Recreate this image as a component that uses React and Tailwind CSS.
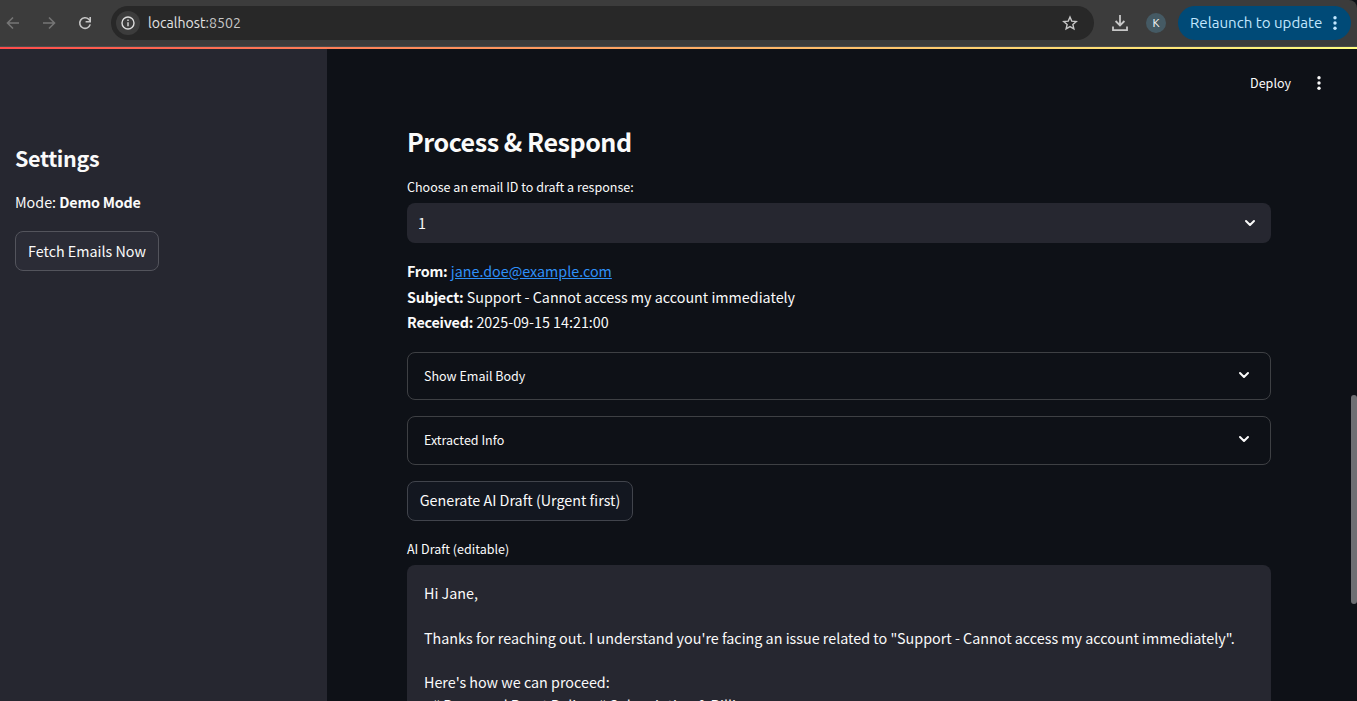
const UI = "font-['Noto_Sans_CJK_SC','Open_Sans',sans-serif]";

function Chevron({ className }) {
  return (
    <svg viewBox="0 0 12 8" className={className} fill="none" stroke="#fafafa" strokeWidth="2" strokeLinecap="round" strokeLinejoin="round">
      <path d="M2 2l4 4 4-4" />
    </svg>
  );
}

function Dots({ className }) {
  return (
    <svg viewBox="0 0 4 16" className={className} fill="currentColor">
      <circle cx="2" cy="2.8" r="1.7" />
      <circle cx="2" cy="8" r="1.7" />
      <circle cx="2" cy="13.2" r="1.7" />
    </svg>
  );
}

function Strong({ children }) {
  return <strong className="tracking-[-0.2px]">{children}</strong>;
}

function BrowserBar() {
  return (
    <header className="flex h-[47px] shrink-0 items-start rounded-tr-lg border-b border-[#4c4c4c] bg-[#3c3c3c] pt-[6px] font-['Ubuntu','Noto_Sans',sans-serif]">
      <div className="flex h-[34px] w-[111px] items-center">
        <svg viewBox="0 0 14 14" className="ml-[6px] size-[14px]" fill="none" stroke="#757575" strokeWidth="1.6">
          <path d="M13 7H1.8M7 1.5L1.5 7L7 12.5" />
        </svg>
        <svg viewBox="0 0 14 14" className="ml-[22px] size-[14px]" fill="none" stroke="#757575" strokeWidth="1.6">
          <path d="M1 7h11.2M7 1.5L12.5 7L7 12.5" />
        </svg>
        <svg viewBox="0 0 14 14" className="ml-[22px] size-[14px]" fill="none" stroke="#c7c7c7" strokeWidth="1.6">
          <path d="M12.2 8.4A5.3 5.3 0 1 1 10.8 3.3L12 4.6" />
          <path d="M12.2 1v4.7H7.6" />
        </svg>
      </div>
      <div className="flex h-[34px] w-[983px] items-center rounded-full bg-[#282828] pl-[5px] pr-[16px]">
        <div className="flex size-6 items-center justify-center rounded-full bg-[#3c3c3c]">
          <svg viewBox="0 0 14 14" className="size-[14px]" fill="none" stroke="#dcdcdc" strokeWidth="1.4">
            <circle cx="7" cy="7" r="6" />
            <path d="M7 6.2v4M7 3.6v1.5" />
          </svg>
        </div>
        <span className="ml-2 text-[14.15px] leading-5 text-[#e3e3e3]">localhost<span className="text-[#c7c7c7]">:8502</span></span>
        <svg viewBox="0 0 24 24" className="ml-auto size-4" fill="none" stroke="#c7c7c7" strokeWidth="2.1">
          <path d="M12 3l2.6 6.2 6.8.6-5.1 4.4 1.5 6.6L12 17.3l-5.8 3.5 1.5-6.6-5.1-4.4 6.8-.6z" />
        </svg>
      </div>
      <div className="flex h-[34px] grow items-center">
        <svg viewBox="0 0 16 16" className="ml-[18px] size-4" fill="none" stroke="#c7c7c7" strokeWidth="1.8">
          <path d="M8 0v10.2M3.6 6l4.4 4.4L12.4 6M1 11.5v3.6h14v-3.6" />
        </svg>
        <div className="ml-[18px] flex size-5 items-center justify-center rounded-full bg-[#455a64] text-[11.5px] leading-none text-white">K</div>
        <div className="ml-[12px] flex h-[34px] w-[173px] items-center rounded-full bg-[#004a77] pl-[12px] text-[#c2e7ff]">
          <span className="w-[136px] whitespace-nowrap text-[15.1px] leading-5">Relaunch to update</span>
          <Dots className="ml-[7px] h-4 w-1" />
        </div>
      </div>
    </header>
  );
}

function Sidebar() {
  return (
    <aside className="w-[327px] shrink-0 bg-[#262730] pl-[15px] pt-[94px]">
      <h2 className="text-[21.5px] font-semibold leading-[29px] tracking-[-0.35px]">Settings</h2>
      <p className="mt-[17px] text-[14.32px] leading-[26px]">Mode: <Strong>Demo Mode</Strong></p>
      <button className="mt-[16px] flex h-10 w-[144px] items-center justify-center whitespace-nowrap rounded-lg border border-[#53545c] bg-[#2b2c36] text-[14.32px]">Fetch Emails Now</button>
    </aside>
  );
}

function Expander({ label, className }) {
  return (
    <div className={`flex items-center rounded-lg border border-[#3e4044] pl-4 pr-[20px] ${className}`}>
      <span className="text-[12.53px] leading-5">{label}</span>
      <Chevron className="mb-[2px] ml-auto h-2 w-3" />
    </div>
  );
}

function Draft() {
  return (
    <div className="mt-[6px] h-[200px] whitespace-pre rounded-t-lg bg-[#262730] pl-[17px] pt-[17px] text-[14.33px] leading-[22.4px]">
      {`Hi Jane,

Thanks for reaching out. I understand you're facing an issue related to "Support - Cannot access my account immediately".

Here's how we can proceed:
- # Password Reset Policy; # Subscription & Billing`}
    </div>
  );
}

export default function App() {
  return (
    <div className="flex h-[701px] w-[1357px] flex-col overflow-hidden bg-[#0e1117]">
      <BrowserBar />
      <div className="h-[2px] shrink-0 bg-linear-to-r from-[#ff4b4b] to-[#fffd80]" />
      <div className={`flex min-h-0 grow text-[#fafafa] ${UI}`}>
        <Sidebar />
        <main className="flex min-w-0 grow flex-col">
          <div className="mt-[24px] flex h-5 shrink-0 items-center justify-end pr-[30px] text-[12.53px] leading-5">
            Deploy
            <Dots className="ml-[26px] h-4 w-1" />
          </div>
          <section className="ml-20 mt-[33px] w-[864px] shrink-0">
            <h2 className="text-[25.06px] font-semibold leading-[30px] tracking-[-0.46px]">Process &amp; Respond</h2>
            <div className="mt-[21px] text-[12.53px] leading-5">Choose an email ID to draft a response:</div>
            <div className="mt-[6px] flex h-10 items-center rounded-lg bg-[#262730] pl-[11px] pr-[15px] text-[14.32px]">
              1
              <Chevron className="ml-auto h-2 w-3" />
            </div>
            <div className="mt-[15px] text-[14.32px] leading-[25.6px]">
              <p><Strong>From:</Strong> <a className="text-[#2e90f8] underline">jane.doe@example.com</a></p>
              <p><Strong>Subject:</Strong> Support - Cannot access my account immediately</p>
              <p><Strong>Received:</Strong> 2025-09-15 14:21:00</p>
            </div>
            <Expander label="Show Email Body" className="mt-[17px] h-12" />
            <Expander label="Extracted Info" className="mt-4 h-[49px]" />
            <button className="mt-4 flex h-10 w-[226px] items-center justify-center whitespace-nowrap rounded-lg border border-[#41444c] bg-[#131720] pb-[2px] text-[14.32px]">Generate AI Draft (Urgent first)</button>
            <div className="mt-[18px] text-[12.53px] leading-5">AI Draft (editable)</div>
            <Draft />
          </section>
        </main>
        <div className="w-[6px] shrink-0 pt-[346px]">
          <div className="h-[209px] rounded-full bg-[#6e6f73]" />
        </div>
      </div>
    </div>
  );
}
